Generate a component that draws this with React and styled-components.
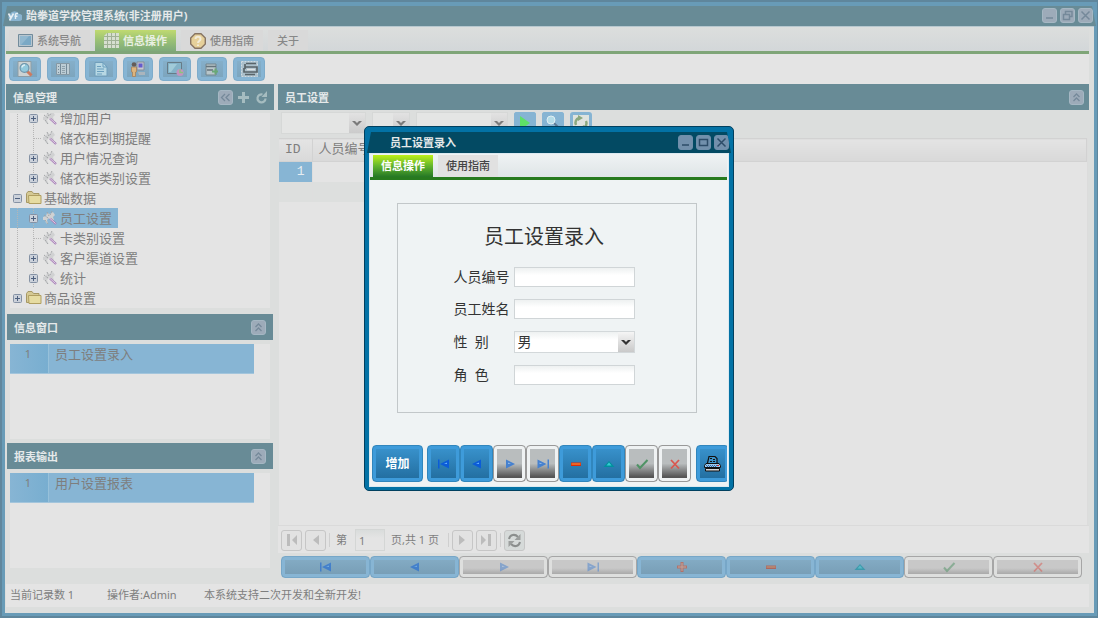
import React, { useState } from "react";
import styled, { createGlobalStyle, css } from "styled-components";

const GlobalStyle = createGlobalStyle`
  * {
    box-sizing: border-box;
  }
  body {
    margin: 0;
    font-family: "Noto Sans", "Noto Sans CJK SC", sans-serif;
    font-size: 11px;
    line-height: 16px;
    color: #7e7e7e;
  }
  button, input, select {
    font: inherit;
    color: inherit;
    margin: 0;
    padding: 0;
  }
  svg {
    display: block;
    flex: none;
  }
`;

const Frame = styled.div`
  display: flex;
  flex-direction: column;
  min-height: 100vh;
  padding: 0 3px 3px;
  border: solid #5f869c;
  border-width: 2px 1px 2px 2px;
  background: #689bb7;
`;

const TitleBar = styled.header`
  display: flex;
  align-items: center;
  gap: 4px;
  height: 20px;
  margin: 4px -2px 0;
  padding: 0 3px 1px 4px;
  background: #688b96;
  clip-path: polygon(4px 0, calc(100% - 4px) 0, 100% 100%, 0 100%);
`;

const WindowTitle = styled.h1`
  flex: 1;
  margin: 0;
  font-size: 11px;
  font-weight: bold;
  color: #e5e9ea;
`;

const ToolGroup = styled.div`
  display: flex;
  gap: 3px;
`;

const ToolButton = styled.button`
  display: grid;
  place-items: center;
  width: 15px;
  height: 15px;
  border: 1px solid ${(p) => (p.$strong ? "#6f8fab" : "#a5b7c3")};
  border-radius: 3px;
  background: ${(p) => (p.$strong ? "#7290ac" : "#9dabb9")};
  color: ${(p) => (p.$strong ? "#2d4c68" : "#75899a")};
`;

const BareTool = styled.button`
  display: grid;
  place-items: center;
  width: 15px;
  height: 15px;
  border: 0;
  background: none;
  color: #a5bcc0;
`;

const Body = styled.div`
  display: flex;
  flex-direction: column;
  flex: 1;
  padding: 0 5px 6px 1px;
  border-top: 1px solid #b7c8cf;
  background: #dcdedd;
`;

const TabBar = styled.nav`
  display: flex;
  align-items: flex-end;
  gap: 5px;
  height: 27px;
  padding: 3px 3px 0;
  border-bottom: 3px solid #7fa578;
  background: linear-gradient(#dcdedd, #d3d7d9);
`;

const Tab = styled.button`
  display: flex;
  align-items: center;
  gap: 4px;
  height: 21px;
  padding: 0 9px;
  border: 0;
  background: #d9d9d9;
  font-weight: ${(p) => (p.$active ? "bold" : "500")};
  color: #888;
  ${(p) =>
    p.$active &&
    css`
      color: #e8efe2;
      background: linear-gradient(#c0da70, #9cc375 45%, #7eaa7b);
    `}
`;

const Toolbar = styled.div`
  display: flex;
  gap: 6px;
  height: 30px;
  padding: 3px;
  background: #e4e4e4;
`;

const ToolbarButton = styled.button`
  display: grid;
  place-items: center;
  width: ${(p) => (p.$narrow ? 30 : 32)}px;
  height: 24px;
  border: 1px solid #7eaccb;
  border-radius: 4px;
  background: linear-gradient(#87b1cc, #7ba3bb);
  box-shadow: inset 0 0 0 3px #87b5d4;
`;

const Work = styled.main`
  display: flex;
  flex: 1;
  gap: 4px;
`;

const Sidebar = styled.aside`
  display: flex;
  flex-direction: column;
  width: 268px;
`;

const PanelHeader = styled.div`
  display: flex;
  align-items: center;
  height: 26px;
  margin: ${(p) => (p.$inset ? "0 1px" : "0")};
  padding: 0 ${(p) => (p.$inset ? 7 : 5)}px 0 7px;
  background: #688b96;
`;

const PanelTitle = styled.h2`
  flex: 1;
  margin: 0;
  padding-top: 2px;
  font-size: 11px;
  font-weight: bold;
  color: #e5e9ea;
`;

const PanelBody = styled.div`
  display: flex;
  height: ${(p) => (p.$height ? p.$height + "px" : "auto")};
  flex: ${(p) => (p.$height ? "none" : "1")};
  padding: ${(p) => (p.$tree ? "3px 4px 6px" : p.$height ? "4px" : "4px 4px 16px")};
`;

const Tree = styled.ul`
  display: flex;
  flex: 1;
  flex-direction: column;
  justify-content: flex-end;
  align-items: flex-start;
  overflow: hidden;
  margin: 0;
  padding: 0;
  list-style: none;
  background: #e4e4e4;
`;

const TreeRow = styled.li`
  display: flex;
  align-items: center;
  flex: none;
  height: 20px;
  padding-right: 6px;
  font-size: 13px;
  background: ${(p) => (p.$selected ? "#87b5d4" : "none")};
`;

const TreeLabel = styled.span`
  margin-left: 2px;
  line-height: 20px;
`;

const List = styled.ol`
  flex: 1;
  margin: 0;
  padding: 0;
  list-style: none;
  background: #e4e4e4;
`;

const ListRow = styled.li`
  display: flex;
  height: 30px;
  margin-right: 16px;
  border-bottom: 1px solid #a3c5dc;
  background: #87b5d4;
  line-height: 20px;
`;

const ListNumber = styled.span`
  width: 39px;
  border-right: 1px solid #97c1da;
  background: linear-gradient(90deg, #87b5d4, #78aed0);
  text-align: center;
  padding-right: 2px;
`;

const ListText = styled.span`
  padding-left: 6px;
  font-size: 13px;
`;

const Content = styled.section`
  display: flex;
  flex: 1;
  flex-direction: column;
`;

const FilterBar = styled.div`
  display: flex;
  gap: 6px;
  height: 28px;
  padding: 2px 3px;
`;

const ComboBox = styled.div`
  display: grid;
  position: relative;
  width: ${(p) => p.$width}px;
  height: 22px;
`;

const ComboSelect = styled.select`
  appearance: none;
  width: 100%;
  padding: 0 20px 0 3px;
  border: 1px solid ${(p) => (p.$bright ? "#d3d8da" : "#d6d8d7")};
  border-radius: 0;
  background: ${(p) => (p.$bright ? "linear-gradient(#eef1f1, #fff 40%)" : "#e4e5e4")};
  font-size: 14px;
`;

const ComboArrow = styled.span`
  display: grid;
  place-items: center;
  position: absolute;
  top: 1px;
  right: 1px;
  width: 16px;
  height: 20px;
  pointer-events: none;
  background: ${(p) =>
    p.$bright ? "linear-gradient(#f5f5f5, #c9c9c9)" : "linear-gradient(#e2e2e2, #cbcbcb)"};
  color: ${(p) => (p.$bright ? "#333" : "#7b7b7b")};
`;

const FilterButton = styled.button`
  display: grid;
  place-items: center;
  width: 22px;
  height: 22px;
  border: 0;
  border-radius: 3px;
  background: ${(p) => (p.$light ? "#dfe3e4" : "#86b4d3")};
  box-shadow: inset 0 0 0 3px #86b4d3;
`;

const GridArea = styled.div`
  flex: 1;
  margin: 0 1px;
  border-right: 1px solid #dcdcdc;
  background: #e4e4e4;
`;

const Grid = styled.table`
  width: 100%;
  border-collapse: collapse;
  table-layout: fixed;
  font-family: "Liberation Mono", "Noto Sans CJK SC", monospace;
  font-size: 13px;
`;

const HeadCell = styled.th`
  width: ${(p) => (p.$width ? p.$width + "px" : "auto")};
  height: 23px;
  padding: 0 6px;
  border: solid #d2d2d2;
  border-width: 1px 1px 1px 0;
  background: linear-gradient(#e4e4e4, #d9d9d9);
  font-weight: normal;
  text-align: left;
`;

const Cell = styled.td`
  height: 20px;
  padding: 0 7px;
  text-align: right;
  border-right: 1px solid #dedede;
  background: ${(p) => (p.$selected ? "#87b5d4" : p.$alt ? "#dddfde" : "none")};
  color: ${(p) => (p.$selected ? "#e6edf2" : "inherit")};
`;

const Pager = styled.div`
  display: flex;
  align-items: center;
  gap: 3px;
  height: 28px;
  padding: 1px 3px 0;
  border-top: 1px solid #dadada;
  background: #e4e4e4;
`;

const PagerButton = styled.button`
  display: grid;
  place-items: center;
  width: 21px;
  height: 21px;
  border: 1px solid #c6c6c6;
  border-radius: 3px;
  background: ${(p) => (p.$solid ? "#d6dad9" : "#e2e2e2")};
  color: ${(p) => (p.$solid ? "#858585" : "#bcbcbc")};
`;

const PagerLine = styled.span`
  width: 1px;
  height: 14px;
  background: #cfcfcf;
`;

const PagerLabel = styled.label`
  display: flex;
  align-items: center;
  gap: 8px;
  margin-left: 3px;
`;

const PageInput = styled.input`
  width: 30px;
  height: 22px;
  padding: 0 3px;
  border: 1px solid #d4d6d5;
  background: linear-gradient(#d9dcdb, #e4e4e4 40%);
`;

const PageText = styled.span`
  margin: 0 6px 0 3px;
`;

const NavBar = styled.div`
  display: flex;
  height: 31px;
  padding: 3px 7px 6px 3px;
`;

const navTones = {
  softBlue: css`
    border-color: #77a7c8;
    background: linear-gradient(#85adc6, #769cb4);
    box-shadow: inset 0 0 0 3px #87b5d4;
  `,
  softGrey: css`
    border-color: #a6a6a6;
    background: linear-gradient(#c8c8c8 55%, #9a9a9a);
    box-shadow: inset 0 0 0 3px #dedfde;
  `,
  blue: css`
    border-color: #3186bd;
    background: linear-gradient(#3a94cf, #216c9d);
    box-shadow: inset 0 0 0 3px #3e9bda;
  `,
  grey: css`
    border-color: #999;
    background: linear-gradient(#b9bdbe 50%, #555 88%);
    box-shadow: inset 0 0 0 3px #eff2f3;
  `,
};

const NavButton = styled.button`
  display: grid;
  place-items: center;
  flex: ${(p) => (p.$width ? "none" : "1")};
  width: ${(p) => (p.$width ? p.$width + "px" : "auto")};
  height: 100%;
  border: 1px solid;
  border-radius: 4px;
  font-size: 12px;
  font-weight: bold;
  color: #fff;
  ${(p) => navTones[p.$tone]}
`;

const SoftIcon = styled.span`
  display: grid;
  opacity: 0.5;
`;

const StatusBar = styled.footer`
  display: flex;
  align-items: center;
  height: 23px;
  padding: 0 4px 1px;
  background: #e4e4e4;
`;

const StatusItem = styled.span`
  min-width: 97px;
`;

const Overlay = styled.div`
  position: fixed;
  inset: 0;
  display: grid;
  place-items: center;
  padding-bottom: 1px;
`;

const Dialog = styled.section`
  display: flex;
  flex-direction: column;
  width: 370px;
  padding: 0 2px 3px;
  border: 1px solid #01405f;
  border-radius: 5px;
  background: #0372a5;
  color: #333;
`;

const DialogHeader = styled.header`
  display: flex;
  align-items: center;
  height: 21px;
  margin-top: 5px;
  padding: 0 2px 0 23px;
  background: #034a63;
  clip-path: polygon(4px 0, calc(100% - 4px) 0, 100% 100%, 0 100%);
`;

const DialogBody = styled.div`
  display: flex;
  flex-direction: column;
  margin: 0 2px;
  padding: 0 1px 4px 0;
  border: 1px solid #dbe9f0;
  background: #eff3f4;
`;

const DialogTabs = styled.nav`
  display: flex;
  align-items: flex-end;
  gap: 5px;
  height: 26px;
  padding: 0 3px;
  border-bottom: 3px solid #277a1e;
  background: linear-gradient(#eff3f4, #dfe5e7);
`;

const DialogTab = styled.button`
  height: 22px;
  padding: 0 8px;
  border: 0;
  background: #e1e1e1;
  font-weight: 500;
  color: #444;
  ${(p) =>
    p.$active &&
    css`
      background: linear-gradient(#bdf018, #62b52d 50%, #257725);
      font-weight: bold;
      color: #fff;
    `}
`;

const FormArea = styled.form`
  display: flex;
  flex-direction: column;
  padding: 23px 30px 32px 27px;
`;

const FormBox = styled.div`
  display: flex;
  flex-direction: column;
  align-items: center;
  height: 210px;
  padding: 18px 0 0;
  border: 1px solid #c2c7c9;
`;

const FormTitle = styled.h3`
  margin: 0 0 15px;
  padding-right: 6px;
  font-size: 20px;
  font-weight: normal;
  line-height: 30px;
`;

const Fields = styled.div`
  display: grid;
  grid-template-columns: 60px 121px;
  align-items: center;
  row-gap: 12px;
  padding-right: 6px;
`;

const FieldLabel = styled.label`
  font-size: 14px;
  line-height: 20px;
  white-space: pre;
`;

const TextField = styled.input`
  width: 100%;
  height: 20px;
  padding: 0 3px;
  border: 1px solid #d0d5d7;
  background: linear-gradient(#eef1f1, #fff 40%);
  font-size: 14px;
`;

const DialogNav = styled.div`
  display: flex;
  height: 37px;
  margin-left: 2px;
  overflow: hidden;
`;

const NavSet = styled.div`
  display: flex;
  flex: none;
  margin: 0 5px 0 4px;
`;

const Chevrons = ({ left }) => (
  <svg width="11" height="11" viewBox="0 0 11 11" fill="none" stroke="currentColor" strokeWidth="1.3">
    {left ? <path d="M5 2 1.500 5.500 5 9M9.500 2 6 5.500 9.500 9" /> : <path d="M2.500 5 5.500 2l3 3M2.500 9l3-3 3 3" />}
  </svg>
);

const windowPaths = {
  minimize: "M2 8h7",
  maximize: "M1.500 2.500h8v6h-8z",
  restore: "M3.500 4V1.500h6.500v5H7.500M1.500 4.500h6v5h-6z",
  close: "M1.500 1.500l8 8M9.500 1.500l-8 8",
};

const WindowIcon = ({ name }) => (
  <svg width="11" height="11" viewBox="0 0 11 11" fill="none" stroke="currentColor" strokeWidth="1.500">
    <path d={windowPaths[name]} />
  </svg>
);

const Arrow = () => (
  <svg width="10" height="7" viewBox="0 0 10 7">
    <path d="M0 1h3l2 2 2-2h3L5 6z" fill="currentColor" />
  </svg>
);

const NavIcon = ({ name }) => (
  <svg width="14" height="12" viewBox="0 0 14 12">
    {name === "first" && (
      <g fill="#0b5cd8">
        <path d="M1 1.500h1.500v9H1zM3 6l9-4.500v9z" />
        <path d="M7 6l3-1.500V6z" fill="#67b3ff" />
      </g>
    )}
    {name === "prev" && (
      <g fill="#0b5cd8">
        <path d="M2 6l9-4.500v9z" />
        <path d="M6 6l3-1.500V6z" fill="#67b3ff" />
      </g>
    )}
    {name === "next" && (
      <g fill="#4681cf">
        <path d="M3 1.500L12 6l-9 4.500z" />
        <path d="M5 4.500L8 6H5z" fill="#92b9e8" />
      </g>
    )}
    {name === "last" && (
      <g fill="#4681cf">
        <path d="M1.500 1.500l9 4.500-9 4.500zM11.500 1.500H13v9h-1.500z" />
        <path d="M3.500 4.500l3 1.500h-3z" fill="#92b9e8" />
      </g>
    )}
    {name === "plus" && (
      <g>
        <path d="M2 6h10M7 1v10" stroke="#e8431c" strokeWidth="3" />
        <path d="M3 6h8M7 2v8" stroke="#ffab80" />
      </g>
    )}
    {name === "minus" && (
      <g>
        <path d="M2 4.500h10v3.500H2z" fill="#d92c0a" />
        <path d="M2.500 6h9" stroke="#ff9c3c" />
      </g>
    )}
    {name === "up" && (
      <g>
        <path d="M1.500 9 7 3l5.500 6z" fill="#00919d" />
        <path d="M4.500 7.500 7 4.500l2.500 3z" fill="#35cfd3" />
      </g>
    )}
    {name === "check" && <path d="M2 6.500 5 10l7.500-8" fill="none" stroke="#4f9365" strokeWidth="2" />}
    {name === "cross" && <path d="M3 2l8 8.500M11 2 3 10.500" stroke="#d9574f" strokeWidth="1.800" />}
  </svg>
);

const PagerIcon = ({ name }) => (
  <svg width="12" height="12" viewBox="0 0 12 12" fill="currentColor">
    {name === "first" && <path d="M1 0h3v12H1zM11 1v10L6 6z" />}
    {name === "prev" && <path d="M9 1v10L3 6z" />}
    {name === "next" && <path d="M3 1v10l6-5z" />}
    {name === "last" && <path d="M1 1v10l5-5zM8 0h3v12H8z" />}
  </svg>
);

const RefreshIcon = () => (
  <svg width="15" height="15" viewBox="0 0 15 15" fill="none" stroke="#8b8e8d" strokeWidth="2">
    <path d="M2 6C3 1.500 8 0.500 11 4M13 9c-1 4.500-6 5.500-9 2" />
    <path d="M13.500 1v6H7.500zM1.500 14V8h6z" fill="#9b9e9d" stroke="none" />
  </svg>
);

const ReloadIcon = () => (
  <svg width="13" height="13" viewBox="0 0 13 13" fill="none" stroke="currentColor" strokeWidth="2.200">
    <path d="M10.500 7.500A4 4 0 1 1 7.500 3.500" />
    <path d="M6.500 6h5.500V0z" fill="currentColor" stroke="none" />
  </svg>
);

const Logo = () => (
  <svg width="15" height="14" viewBox="0 0 15 14">
    <path d="M4 12a4 4 0 0 1-1-7 5 5 0 0 1 9 0 3.500 3.500 0 0 1 0 7z" fill="#89b4d0" />
    <path d="M1.500 4.500 4 9l2.500-4.500M4 9l-1.500 2.500" fill="none" stroke="#e6eff4" strokeWidth="1.600" />
    <path d="M8.500 10V5.500c0-1 1-1.200 2.500-1M7.500 7.200h3" fill="none" stroke="#e6eff4" strokeWidth="1.400" />
  </svg>
);

const MonitorIcon = () => (
  <svg width="15" height="13" viewBox="0 0 15 13">
    <path d="M.5.5h14v12H.500z" fill="#b8c6cf" stroke="#728b9b" />
    <path d="M2 2h11v9H2z" fill="#7ba9c5" />
    <path d="M2 2h9L3 11H2z" fill="#92b8cf" />
  </svg>
);

const GridIcon = () => (
  <svg width="15" height="15" viewBox="0 0 15 15">
    <path d="M3 0h12v15H0V3z" fill="#d7dfd0" />
    <path d="M3.500 0v15M7.500 0v15M11.500 0v15M0 3.500h15M0 7.500h15M0 11.500h15" stroke="#a0b196" />
  </svg>
);

const HelpIcon = () => (
  <svg width="16" height="16" viewBox="0 0 16 16">
    <path d="M5 .7h6L15.300 5v6L11 15.300H5L.7 11V5z" fill="#e6d09a" stroke="#887563" strokeWidth="1.400" />
    <path d="M5.500 6C5.500 3 10.500 3 10.500 6 10.500 8 8 8 8 10M8 11.500V13" fill="none" stroke="#f2ebd8" strokeWidth="2" />
  </svg>
);

const toolbarIcons = [
  <svg width="16" height="16" viewBox="0 0 16 16">
    <path d="M1 .500h13v15H1z" fill="#ccd2d2" stroke="#8d9da5" />
    <path d="M10 10l4.500 4.500" stroke="#cd7a60" strokeWidth="3" />
    <circle cx="7.500" cy="7" r="4.400" fill="#92c9dc" stroke="#6f96ac" strokeWidth="1.200" />
    <path d="M5 6.500a3 3 0 0 1 3-2.500" fill="none" stroke="#dceff4" strokeWidth="1.500" />
  </svg>,
  <svg width="14" height="12" viewBox="0 0 14 12">
    <path d="M.5.500h13v11H.500z" fill="#bdcdd5" stroke="#8699a4" />
    <path d="M4.500 1v10M10.500 1v10M2 3.500h1M2 6.500h1M2 9.500h1" stroke="#748a98" />
    <path d="M6 3.500h3M6 5.500h3M6 7.500h3M6 9.500h3" stroke="#8fa1ab" />
  </svg>,
  <svg width="14" height="15" viewBox="0 0 14 15">
    <path d="M1 .500h8L13 5v9H1z" fill="#b7d8e4" stroke="#6f9ebc" />
    <path d="M9 .500V5h4M3 4.500h4M3 7h7M3 9.500h7M3 12h5" fill="none" stroke="#6b9fbe" />
  </svg>,
  <svg width="16" height="16" viewBox="0 0 16 16">
    <path d="M7 1h7v8H7z" fill="#c8c8cf" stroke="#848e9c" />
    <path d="M8.500 2.500h4v4h-4z" fill="#655ccc" />
    <path d="M8 11h7v3H9z" fill="#aab5bd" />
    <circle cx="4" cy="3.500" r="2.300" fill="#655c58" />
    <path d="M1.500 6h5v5H5.500v4.500h-3V11h-1z" fill="#ddb57d" stroke="#a6815a" strokeWidth=".8" />
  </svg>,
  <svg width="17" height="15" viewBox="0 0 17 15">
    <path d="M.500.500h14v11H.500z" fill="#84b3c8" stroke="#667b87" />
    <path d="M2 2h8L4 10H2z" fill="#a1cbd9" />
    <circle cx="13" cy="10.500" r="3.500" fill="#c594bf" />
    <path d="M13 7.500v3h3" fill="none" stroke="#8ac47f" strokeWidth="1.500" />
  </svg>,
  <svg width="14" height="13" viewBox="0 0 14 13">
    <path d="M1 1h10v11H1z" fill="#b8c6ca" stroke="#75868e" />
    <path d="M1 3.500h10M2 7h6" stroke="#65747c" strokeWidth="1.500" />
    <path d="M7 8.500h6M10.500 5.500v6" stroke="#69a876" strokeWidth="2" />
  </svg>,
  <svg width="17" height="16" viewBox="0 0 17 16">
    <path d="M.500.500h16v15H.500z" fill="#abbfca" stroke="#d2dbe0" strokeDasharray="2 1" />
    <path d="M5 2.500h10M4 3v5M4 6h12v5H3V7M4 13.500h10" fill="none" stroke="#59646a" strokeWidth="1.700" />
    <path d="M6 8.500h8" stroke="#e0e3e3" strokeWidth="1.500" />
  </svg>,
];

const PlayIcon = () => (
  <svg width="14" height="16" viewBox="0 0 14 16">
    <path d="M2 1l10 7-10 7z" fill="#5ee067" />
  </svg>
);

const SearchIcon = () => (
  <svg width="16" height="16" viewBox="0 0 16 16">
    <path d="M9 8l5 5" stroke="#617b94" strokeWidth="2" />
    <circle cx="6" cy="5" r="4" fill="#b4dce8" stroke="#e0eef2" />
  </svg>
);

const CycleIcon = () => (
  <svg width="16" height="16" viewBox="0 0 16 16">
    <path d="M0 0h16v16H0z" fill="#dfe3df" />
    <path d="M3 10A5 5 0 0 1 6 3M13 6a5 5 0 0 1-3 7" fill="none" stroke="#8ba87f" strokeWidth="2.500" />
    <path d="M5 0l5 3-5 3zM11 10v6l-5-3z" fill="#8ba87f" />
  </svg>
);

const PrinterIcon = () => (
  <svg width="17" height="17" viewBox="0 0 17 17">
    <path d="M3.500 8 5 1.500h6l2 2V8" fill="#3d93c9" stroke="#111" strokeWidth="1.200" />
    <path d="M6 3.500h2M9 4.500h2M6 6.500h2M9 6.500h2" stroke="#111" />
    <path d="M2 8.500h13l1.500 2v2H.500v-2z" fill="#9fcaec" stroke="#111" />
    <path d="M2 10.500h11M3 11.500h10" stroke="#2f69a8" strokeDasharray="1 1" />
    <path d="M13 10.500h2" stroke="#cf2828" />
    <path d="M1.500 13.500h14v2.500h-14z" fill="#d6d6d6" stroke="#111" />
  </svg>
);

// one 16px column of the tree: dotted guide line, elbow and expander
const Guide = ({ line, elbow, toggle }) => (
  <svg width="16" height="20" viewBox="0 0 16 20">
    {line && <path d="M7.500 0v20" stroke="#b5b5b5" strokeDasharray="1 1" />}
    {elbow && <path d="M8 10.500h8" stroke="#b5b5b5" strokeDasharray="1 1" />}
    {toggle && (
      <g>
        <rect x="3.500" y="6.500" width="8" height="8" rx="1" fill="#cbd1da" stroke="#8592a5" />
        <path d={toggle === "plus" ? "M5 10.500h5M7.500 8v5" : "M5 10.500h5"} stroke="#4e607e" />
      </g>
    )}
  </svg>
);

const FolderIcon = () => (
  <svg width="16" height="14" viewBox="0 0 16 14">
    <path d="M.500 11.500v-9l1.500-2h4l1.500 2H13v9z" fill="#d5c994" stroke="#a69865" />
    <path d="M2.500 4.500h12.500v8H3z" fill="#e6dca2" stroke="#b09f62" />
  </svg>
);

const LeafIcon = () => (
  <svg width="16" height="16" viewBox="0 0 16 16">
    <path d="M1 7l3-1 1-3 3 1 3-2 2 3-2 2 1 3-3 1-2-3-2 2 1 4-2-1-1-3-2 0z" fill="#d0d1d2" />
    <path d="M2 5l4 3M5 2l2 4M10 1 8 5M3 10l3 4" stroke="#a2a4a6" strokeDasharray="2 1" />
    <path d="M8 8.500l6 5.500" stroke="#a37bb4" strokeWidth="2.200" />
    <path d="M7.500 8l6 5.500" stroke="#e2d2e6" />
  </svg>
);

const treeItems = [
  { text: "增加用户", level: 2, toggle: "plus" },
  { text: "储衣柜到期提醒", level: 2 },
  { text: "用户情况查询", level: 2, toggle: "plus" },
  { text: "储衣柜类别设置", level: 2, toggle: "plus" },
  { text: "基础数据", level: 1, toggle: "minus" },
  { text: "员工设置", level: 2, toggle: "plus", selected: true },
  { text: "卡类别设置", level: 2 },
  { text: "客户渠道设置", level: 2, toggle: "plus" },
  { text: "统计", level: 2, toggle: "plus" },
  { text: "商品设置", level: 1, toggle: "plus" },
];

const toolbarNames = ["查询", "列表", "文档", "用户", "屏幕", "新增", "打印"];

const mainNav = [
  ["first", "softBlue", "首条"],
  ["prev", "softBlue", "上一条"],
  ["next", "softGrey", "下一条"],
  ["last", "softGrey", "末条"],
  ["plus", "softBlue", "新增"],
  ["minus", "softBlue", "删除"],
  ["up", "softBlue", "编辑"],
  ["check", "softGrey", "保存"],
  ["cross", "softGrey", "取消"],
];

const dialogNav = [
  ["first", "blue", "首条"],
  ["prev", "blue", "上一条"],
  ["next", "grey", "下一条"],
  ["last", "grey", "末条"],
  ["minus", "blue", "删除"],
  ["up", "blue", "编辑"],
  ["check", "grey", "保存"],
  ["cross", "grey", "取消"],
];

const Combo = ({ width, id, label, bright, children, ...rest }) => (
  <ComboBox $width={width}>
    <ComboSelect id={id} aria-label={label} $bright={bright} {...rest}>
      {children}
    </ComboSelect>
    <ComboArrow $bright={bright}>
      <Arrow />
    </ComboArrow>
  </ComboBox>
);

const SidePanel = ({ title, text, height }) => (
  <>
    <PanelHeader $inset>
      <PanelTitle>{title}</PanelTitle>
      <ToolButton aria-label="收起">
        <Chevrons />
      </ToolButton>
    </PanelHeader>
    <PanelBody $height={height}>
      <List>
        <ListRow>
          <ListNumber>1</ListNumber>
          <ListText>{text}</ListText>
        </ListRow>
      </List>
    </PanelBody>
  </>
);

const EntryDialog = () => {
  const [gender, setGender] = useState("男");
  return (
    <Overlay>
      <Dialog role="dialog" aria-label="员工设置录入">
        <DialogHeader>
          <WindowTitle as="h2">员工设置录入</WindowTitle>
          <ToolGroup>
            {["minimize", "maximize", "close"].map((name) => (
              <ToolButton key={name} $strong aria-label={name}>
                <WindowIcon name={name} />
              </ToolButton>
            ))}
          </ToolGroup>
        </DialogHeader>
        <DialogBody>
          <DialogTabs>
            <DialogTab $active>信息操作</DialogTab>
            <DialogTab>使用指南</DialogTab>
          </DialogTabs>
          <FormArea>
            <FormBox>
              <FormTitle>员工设置录入</FormTitle>
              <Fields>
                <FieldLabel htmlFor="code">人员编号</FieldLabel>
                <TextField id="code" />
                <FieldLabel htmlFor="name">员工姓名</FieldLabel>
                <TextField id="name" />
                <FieldLabel htmlFor="gender">{"性  别"}</FieldLabel>
                <Combo
                  id="gender"
                  width={121}
                  bright
                  value={gender}
                  onChange={(e) => setGender(e.target.value)}
                >
                  <option>男</option>
                  <option>女</option>
                </Combo>
                <FieldLabel htmlFor="role">{"角  色"}</FieldLabel>
                <TextField id="role" />
              </Fields>
            </FormBox>
          </FormArea>
          <DialogNav>
            <NavButton $tone="blue" $width={51}>
              增加
            </NavButton>
            <NavSet>
              {dialogNav.map(([name, tone, label]) => (
                <NavButton key={name} $tone={tone} $width={33} aria-label={label}>
                  <NavIcon name={name} />
                </NavButton>
              ))}
            </NavSet>
            <NavButton $tone="blue" $width={33} aria-label="打印">
              <PrinterIcon />
            </NavButton>
          </DialogNav>
        </DialogBody>
      </Dialog>
    </Overlay>
  );
};

const App = () => {
  const [page, setPage] = useState("1");
  return (
    <>
      <GlobalStyle />
      <Frame>
        <TitleBar>
          <Logo />
          <WindowTitle>跆拳道学校管理系统(非注册用户)</WindowTitle>
          <ToolGroup>
            {["minimize", "restore", "close"].map((name) => (
              <ToolButton key={name} aria-label={name}>
                <WindowIcon name={name} />
              </ToolButton>
            ))}
          </ToolGroup>
        </TitleBar>
        <Body>
          <TabBar>
            <Tab>
              <MonitorIcon />
              系统导航
            </Tab>
            <Tab $active>
              <GridIcon />
              信息操作
            </Tab>
            <Tab>
              <HelpIcon />
              使用指南
            </Tab>
            <Tab>关于</Tab>
          </TabBar>
          <Toolbar>
            {toolbarIcons.map((icon, i) => (
              <ToolbarButton key={i} $narrow={i === 3 || i === 5} aria-label={toolbarNames[i]}>
                {icon}
              </ToolbarButton>
            ))}
          </Toolbar>
          <Work>
            <Sidebar>
              <PanelHeader>
                <PanelTitle>信息管理</PanelTitle>
                <ToolGroup>
                  <ToolButton aria-label="收起">
                    <Chevrons left />
                  </ToolButton>
                  <BareTool aria-label="新增">
                    <svg width="11" height="11" viewBox="0 0 11 11" stroke="currentColor" strokeWidth="3">
                      <path d="M0 5.500h11M5.500 0v11" />
                    </svg>
                  </BareTool>
                  <BareTool aria-label="刷新">
                    <ReloadIcon />
                  </BareTool>
                </ToolGroup>
              </PanelHeader>
              <PanelBody $tree $height={204}>
                <Tree>
                  {treeItems.map((item) => (
                    <TreeRow key={item.text} $selected={item.selected}>
                      {item.level === 2 && <Guide line />}
                      <Guide line={item.level === 2} elbow={!item.toggle} toggle={item.toggle} />
                      {item.level === 1 ? <FolderIcon /> : <LeafIcon />}
                      <TreeLabel>{item.text}</TreeLabel>
                    </TreeRow>
                  ))}
                </Tree>
              </PanelBody>
              <SidePanel title="信息窗口" text="员工设置录入" height={103} />
              <SidePanel title="报表输出" text="用户设置报表" />
            </Sidebar>
            <Content>
              <PanelHeader>
                <PanelTitle>员工设置</PanelTitle>
                <ToolButton aria-label="收起">
                  <Chevrons />
                </ToolButton>
              </PanelHeader>
              <FilterBar>
                <Combo width={85} label="字段" />
                <Combo width={38} label="条件" />
                <Combo width={92} label="值" />
                <FilterButton aria-label="执行">
                  <PlayIcon />
                </FilterButton>
                <FilterButton aria-label="查找">
                  <SearchIcon />
                </FilterButton>
                <FilterButton $light aria-label="刷新">
                  <CycleIcon />
                </FilterButton>
              </FilterBar>
              <GridArea>
                <Grid>
                  <thead>
                    <tr>
                      <HeadCell $width={33}>ID</HeadCell>
                      <HeadCell $width={140}>人员编号</HeadCell>
                      <HeadCell />
                    </tr>
                  </thead>
                  <tbody>
                    <tr>
                      <Cell $selected>1</Cell>
                      <Cell />
                    </tr>
                    <tr>
                      <Cell $alt />
                      <Cell $alt />
                    </tr>
                  </tbody>
                </Grid>
              </GridArea>
              <Pager>
                <PagerButton aria-label="首页">
                  <PagerIcon name="first" />
                </PagerButton>
                <PagerButton aria-label="上一页">
                  <PagerIcon name="prev" />
                </PagerButton>
                <PagerLine />
                <PagerLabel>
                  第
                  <PageInput value={page} onChange={(e) => setPage(e.target.value)} />
                </PagerLabel>
                <PageText>页,共 1 页</PageText>
                <PagerLine />
                <PagerButton aria-label="下一页">
                  <PagerIcon name="next" />
                </PagerButton>
                <PagerButton aria-label="末页">
                  <PagerIcon name="last" />
                </PagerButton>
                <PagerLine />
                <PagerButton $solid aria-label="刷新">
                  <RefreshIcon />
                </PagerButton>
              </Pager>
              <NavBar>
                {mainNav.map(([name, tone, label]) => (
                  <NavButton key={name} $tone={tone} aria-label={label}>
                    <SoftIcon>
                      <NavIcon name={name} />
                    </SoftIcon>
                  </NavButton>
                ))}
              </NavBar>
            </Content>
          </Work>
          <StatusBar>
            <StatusItem>当前记录数 1</StatusItem>
            <StatusItem>操作者:Admin</StatusItem>
            <StatusItem>本系统支持二次开发和全新开发!</StatusItem>
          </StatusBar>
        </Body>
      </Frame>
      <EntryDialog />
    </>
  );
};

export default App;
